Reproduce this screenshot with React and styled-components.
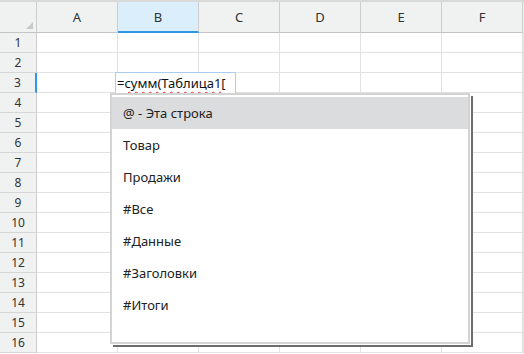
import { Fragment } from 'react';
import styled, { createGlobalStyle } from 'styled-components';

const GlobalStyle = createGlobalStyle`
  html, body { margin: 0; padding: 0; background: #fff; }
  body { font-family: "Noto Sans", "Open Sans", sans-serif; }
`;

const COLUMNS = ['A', 'B', 'C', 'D', 'E', 'F'];
const ROWS = Array.from({ length: 16 }, (_, i) => i + 1);
const ITEMS = ['@ - Эта строка', 'Товар', 'Продажи', '#Все', '#Данные', '#Заголовки', '#Итоги'];

const Sheet = styled.div`
  position: relative;
  width: 524px;
  height: 354px;
  box-sizing: border-box;
  border-top: 2px solid #d9d9d9;
  display: grid;
  grid-template-columns: 37px repeat(6, 81px) 1fr;
  grid-template-rows: 31px repeat(16, 20px) 1fr;
  overflow: hidden;
  background: #fff;
`;

const Corner = styled.div`
  position: relative;
  background: #f0f1f1;
  border-right: 1px solid #cdcdcd;
  border-bottom: 1px solid #c4c4c4;
  &::after {
    content: '';
    position: absolute;
    right: 3px;
    bottom: 3px;
    border-style: solid;
    border-width: 0 0 7px 7px;
    border-color: transparent transparent #c9c9c9 transparent;
  }
`;

const ColHead = styled.div`
  display: flex;
  align-items: center;
  justify-content: center;
  font-size: 13px;
  color: #333;
  background: ${p => (p.$active ? '#dbeefc' : '#f0f1f1')};
  border-right: 1px solid #cdcdcd;
  border-bottom: ${p => (p.$active ? '2px solid #2f98e6' : '1px solid #c4c4c4')};
`;

const RowHead = styled.div`
  display: flex;
  align-items: center;
  justify-content: center;
  font-size: 12px;
  color: #333;
  background: #f0f1f1;
  border-right: ${p => (p.$active ? '2px solid #2f98e6' : '1px solid #cdcdcd')};
  border-bottom: 1px solid #d6d6d6;
`;

const Cell = styled.div`
  border-right: 1px solid #e2e2e2;
  border-bottom: 1px solid #e2e2e2;
`;

const Filler = styled.div`
  background: #f0f1f1;
`;

const Editor = styled.div`
  position: absolute;
  left: 115px;
  top: 70px;
  width: 121px;
  height: 21px;
  box-sizing: border-box;
  background: #fff;
  border: 1px solid #a9cdee;
  border-bottom: none;
  padding-left: 1px;
  font-size: 13px;
  line-height: 20px;
  color: #111;
  white-space: nowrap;
`;

const Misspelled = styled.span`
  text-decoration: underline wavy #e8333a;
  text-decoration-thickness: 1px;
  text-underline-offset: 3px;
`;

const Dropdown = styled.div`
  position: absolute;
  left: 110px;
  top: 91px;
  width: 360px;
  height: 251px;
  box-sizing: border-box;
  background: #fff;
  border: 2px solid #d3d3d3;
  box-shadow: 1px 1px 0 #fff, 3px 3px 0 #6d6d6d;
  padding-top: 2px;
`;

const Item = styled.div`
  height: 32px;
  display: flex;
  align-items: center;
  padding-left: 11px;
  font-size: 13px;
  color: #222;
  background: ${p => (p.$active ? '#dbdcdd' : 'transparent')};
`;

export default function App() {
  return (
    <>
      <GlobalStyle />
      <Sheet>
        <Corner />
        {COLUMNS.map(c => (
          <ColHead key={c} $active={c === 'B'}>{c}</ColHead>
        ))}
        <Filler />
        {ROWS.map(r => (
          <Fragment key={r}>
            <RowHead $active={r === 3}>{r}</RowHead>
            {COLUMNS.map(c => (
              <Cell key={c} />
            ))}
            <Cell />
          </Fragment>
        ))}
        <Editor>
          =<Misspelled>сумм(Таблица1</Misspelled>[
        </Editor>
        <Dropdown>
          {ITEMS.map((t, i) => (
            <Item key={t} $active={i === 0}>{t}</Item>
          ))}
        </Dropdown>
      </Sheet>
    </>
  );
}
